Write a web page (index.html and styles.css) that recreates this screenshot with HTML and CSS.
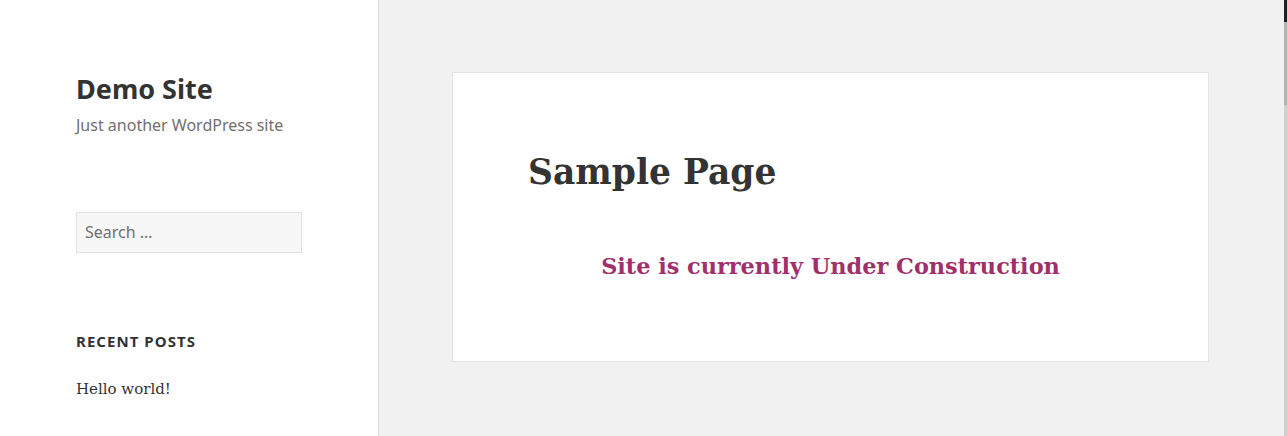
FILE: index.html
```html
<!DOCTYPE html>
<html lang="en">
<head>
<meta charset="utf-8">
<title>Sample Page – Demo Site</title>
<link rel="stylesheet" href="styles.css">
</head>
<body>
<div class="site">
  <aside class="sidebar">
    <header class="site-header">
      <p class="site-title">Demo Site</p>
      <p class="site-description">Just another WordPress site</p>
    </header>
    <div class="widget widget-search">
      <div class="search-field">Search …</div>
    </div>
    <div class="widget widget-recent">
      <h2 class="widget-title">Recent Posts</h2>
      <ul class="post-list">
        <li>Hello world!</li>
      </ul>
    </div>
  </aside>
  <main class="content">
    <article class="entry">
      <h1 class="entry-title">Sample Page</h1>
      <h3 class="notice">Site is currently Under Construction</h3>
    </article>
  </main>
</div>
<div class="scrollbar">
  <div class="sb-top"></div>
  <div class="sb-thumb"></div>
  <div class="sb-track"></div>
</div>
</body>
</html>
```
FILE: styles.css
```css
html, body {
  margin: 0;
  padding: 0;
  height: 100%;
}
body {
  background: #f1f1f1;
  color: #333333;
  font-family: "DejaVu Serif", serif;
  overflow: hidden;
}
.site {
  display: flex;
  min-height: 436px;
}
.sidebar {
  width: 378px;
  flex: none;
  background: #ffffff;
  box-shadow: 1px 0 0 #dcdcdc;
  padding: 71px 0 0 76px;
  box-sizing: border-box;
}
.site-title {
  margin: 0;
  font-family: "Noto Sans", sans-serif;
  font-weight: 700;
  font-size: 27px;
  line-height: 36px;
  color: #333333;
}
.site-description {
  margin: 6px 0 0;
  font-family: "Noto Sans", sans-serif;
  font-size: 16px;
  line-height: 24px;
  color: #707070;
}
.widget-search {
  margin-top: 75px;
}
.search-field {
  width: 226px;
  height: 41px;
  box-sizing: border-box;
  background: #f7f7f7;
  border: 1px solid #e3e3e3;
  padding: 0 8px;
  font-family: "Noto Sans", sans-serif;
  font-size: 16px;
  line-height: 39px;
  color: #707070;
}
.widget-recent {
  margin-top: 77px;
}
.widget-title {
  margin: 0;
  font-family: "Noto Sans", sans-serif;
  font-weight: 700;
  font-size: 15px;
  line-height: 22px;
  letter-spacing: 0.07em;
  text-transform: uppercase;
  color: #333333;
}
.post-list {
  list-style: none;
  margin: 25px 0 0;
  padding: 0;
  font-family: "DejaVu Serif", serif;
  font-size: 15px;
  line-height: 24px;
  color: #333333;
}
.content {
  flex: 1;
  padding: 73px 0 0 75px;
}
.entry {
  width: 755px;
  height: 288px;
  box-sizing: border-box;
  background: #ffffff;
  box-shadow: 0 0 0 1px #e4e4e4;
  padding: 75px 75px 0;
}
.entry-title {
  margin: 0;
  font-family: "DejaVu Serif", serif;
  font-weight: 700;
  font-size: 34.5px;
  line-height: 48px;
  color: #333333;
}
.notice {
  margin: 54px 0 0;
  text-align: center;
  font-family: "DejaVu Serif", serif;
  font-weight: 700;
  font-size: 22.4px;
  line-height: 32px;
  color: #a0306a;
}
.scrollbar {
  position: fixed;
  top: 0;
  right: 0;
  width: 3px;
  height: 100%;
  display: flex;
  flex-direction: column;
}
.sb-top {
  height: 22px;
  background: #1e2124;
}
.sb-thumb {
  height: 83px;
  background: #b4b4b4;
}
.sb-track {
  flex: 1;
  background: #d0d0d0;
}
```
